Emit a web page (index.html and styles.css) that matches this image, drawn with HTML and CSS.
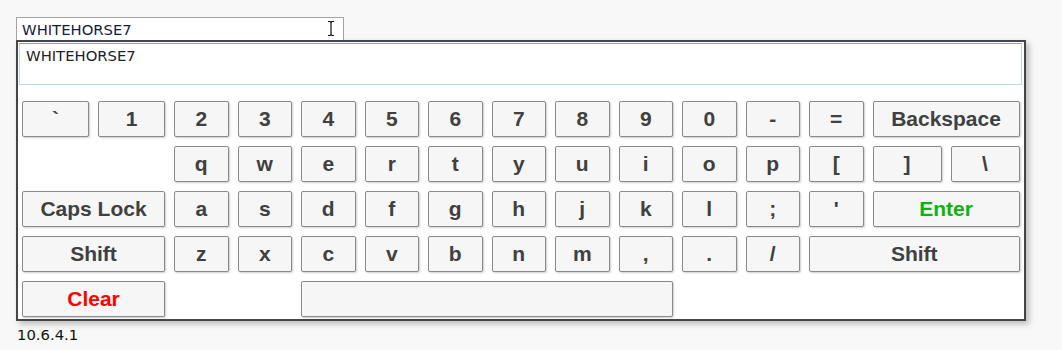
FILE: index.html
```html
<!DOCTYPE html>
<html lang="en">
<head>
    <meta charset="UTF-8">
    <title>Keyboard</title>
    <link rel="stylesheet" href="styles.css">
</head>
<body>

    <div class="widget">
        <div class="field">
            <span class="field-text">WHITEHORSE7</span>
            <svg class="cursor" width="8" height="17" viewBox="0 0 8 17">
                <path d="M1 1.5h2l1 1 1-1h2M4 2.5v12M1 15.5h2l1-1 1 1h2" fill="none" stroke="#fff" stroke-width="3"/>
                <path d="M1 1.5h2l1 1 1-1h2M4 2.5v12M1 15.5h2l1-1 1 1h2" fill="none" stroke="#111" stroke-width="1.2"/>
            </svg>
        </div>

        <!-- Keyboard popup -->
        <div class="keyboard">
            <div class="preview">WHITEHORSE7</div>

            <div class="keys">
                <button class="key">`</button>
                <button class="key">1</button>
                <button class="key">2</button>
                <button class="key">3</button>
                <button class="key">4</button>
                <button class="key">5</button>
                <button class="key">6</button>
                <button class="key">7</button>
                <button class="key">8</button>
                <button class="key">9</button>
                <button class="key">0</button>
                <button class="key">-</button>
                <button class="key">=</button>
                <button class="key span-2">Backspace</button>

                <button class="key row-start">q</button>
                <button class="key">w</button>
                <button class="key">e</button>
                <button class="key">r</button>
                <button class="key">t</button>
                <button class="key">y</button>
                <button class="key">u</button>
                <button class="key">i</button>
                <button class="key">o</button>
                <button class="key">p</button>
                <button class="key">[</button>
                <button class="key">]</button>
                <button class="key">\</button>

                <button class="key span-2">Caps Lock</button>
                <button class="key">a</button>
                <button class="key">s</button>
                <button class="key">d</button>
                <button class="key">f</button>
                <button class="key">g</button>
                <button class="key">h</button>
                <button class="key">j</button>
                <button class="key">k</button>
                <button class="key">l</button>
                <button class="key">;</button>
                <button class="key">'</button>
                <button class="key span-2 enter">Enter</button>

                <button class="key span-2">Shift</button>
                <button class="key">z</button>
                <button class="key">x</button>
                <button class="key">c</button>
                <button class="key">v</button>
                <button class="key">b</button>
                <button class="key">n</button>
                <button class="key">m</button>
                <button class="key">,</button>
                <button class="key">.</button>
                <button class="key">/</button>
                <button class="key span-3">Shift</button>

                <button class="key span-2 clear">Clear</button>
                <button class="key space"></button>
            </div>
        </div>
    </div>

    <div class="version">10.6.4.1</div>

</body>
</html>
```

FILE: styles.css
```css
/* Page */
body {
    margin: 0;
    padding: 17px 16px 0 16px;
    background-color: #f8f8f8;
    font-family: 'DejaVu Sans', Verdana, sans-serif;
    font-size: 14.8px;
    color: #222;
}

/* Text field */
.field {
    position: relative;
    box-sizing: border-box;
    width: 328px;
    height: 23px;
    padding: 3px 5px 0 5px;
    border: 1px solid #a3a3a3;
    border-bottom: none;
    background-color: white;
    color: #1a1a3a;
}

.field-text {
    line-height: 17px;
}

/* mouse pointer caught in the screenshot */
.cursor {
    position: absolute;
    top: 2px;
    right: 8px;
}

/* Keyboard popup */
.keyboard {
    box-sizing: border-box;
    width: 1010px;
    padding: 1px 2px 2px 1px;
    border: 2px solid #454545;
    background-color: white;
    box-shadow: 3px 3px 6px rgba(0, 0, 0, 0.25);
}

.preview {
    box-sizing: border-box;
    height: 42px;
    padding: 5px 6px;
    border: 1px solid #bcd9ee;
    border-top-color: #6fa6d6;
    line-height: 14px;
    color: #222;
}

/* Key grid */
.keys {
    display: grid;
    grid-template-columns: 67px 67px repeat(11, 54.5px) 69px 69px;
    grid-auto-rows: 36px;
    gap: 9px;
    padding: 16px 3px 0 3px;
}

.key {
    margin: 0;
    padding: 0;
    border: 1px solid #8a8a8a;
    border-radius: 2px;
    background-color: #f6f6f6;
    box-shadow: 1px 1px 2px rgba(0, 0, 0, 0.2);
    font-family: 'Liberation Sans', Arial, sans-serif;
    font-size: 21px;
    font-weight: bold;
    color: #404040;
    cursor: pointer;
}

.key:hover {
    background-color: #ececec;
}

.span-2 {
    grid-column: span 2;
}

.span-3 {
    grid-column: span 3;
}

.row-start {
    grid-column-start: 3;
}

.space {
    grid-column: 5 / span 6;
}

.enter {
    color: #11b111;
}

.clear {
    color: #ff0000;
}

/* Version line */
.version {
    margin-top: 5px;
    padding-left: 1px;
    color: #111;
}
```
